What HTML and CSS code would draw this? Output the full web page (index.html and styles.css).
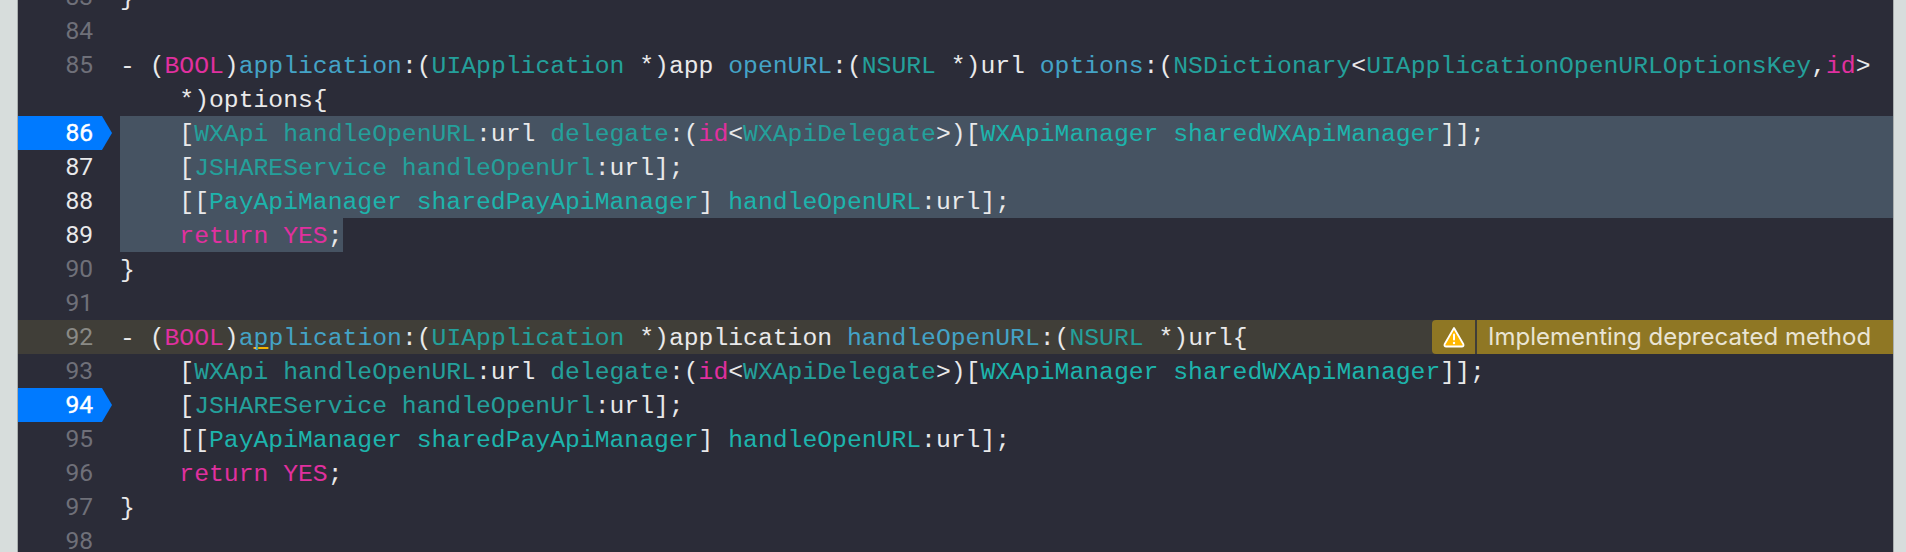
FILE: index.html
```html
<!DOCTYPE html>
<html lang="en">
<head>
<meta charset="utf-8">
<title>Editor</title>
<link rel="stylesheet" href="styles.css">
</head>
<body>
<div class="window">
  <div class="left-edge"></div>
  <main class="editor">
    <div class="row"><span class="num">83</span><code class="code">}</code></div>
    <div class="row"><span class="num">84</span><code class="code"></code></div>
    <div class="row"><span class="num">85</span><code class="code">- (<i class="kw">BOOL</i>)<i class="mth">application</i>:(<i class="typ">UIApplication</i> *)app <i class="mth">openURL</i>:(<i class="typ">NSURL</i> *)url <i class="mth">options</i>:(<i class="typ">NSDictionary</i>&lt;<i class="typ">UIApplicationOpenURLOptionsKey</i>,<i class="kw">id</i>&gt;</code></div>
    <div class="row"><span class="num"></span><code class="code">    *)options{</code></div>
    <div class="row row-active"><span class="num bp">86</span><code class="code sel">    [<i class="typ">WXApi</i> <i class="typ">handleOpenURL</i>:url <i class="typ">delegate</i>:(<i class="kw">id</i>&lt;<i class="typ">WXApiDelegate</i>&gt;)[<i class="prj">WXApiManager</i> <i class="prj">sharedWXApiManager</i>]];</code></div>
    <div class="row row-active"><span class="num">87</span><code class="code sel">    [<i class="typ">JSHAREService</i> <i class="typ">handleOpenUrl</i>:url];</code></div>
    <div class="row row-active"><span class="num">88</span><code class="code sel">    [[<i class="prj">PayApiManager</i> <i class="prj">sharedPayApiManager</i>] <i class="prj">handleOpenURL</i>:url];</code></div>
    <div class="row row-active"><span class="num">89</span><code class="code"><span class="sel-part">    <i class="kw">return</i> <i class="kw">YES</i>;</span></code></div>
    <div class="row"><span class="num">90</span><code class="code">}</code></div>
    <div class="row"><span class="num">91</span><code class="code"></code></div>
    <div class="row row-warn"><span class="num">92</span><code class="code">- (<i class="kw">BOOL</i>)<i class="mth">a<u class="squiggle">p</u>plication</i>:(<i class="typ">UIApplication</i> *)application <i class="mth">handleOpenURL</i>:(<i class="typ">NSURL</i> *)url{</code>
      <div class="issue">
        <span class="issue-icon">
          <svg width="22" height="22" viewBox="0 0 22 22" aria-hidden="true">
            <path d="M11 2 L20.4 18.2 Q21 20.5 18.8 20.5 L3.2 20.5 Q1 20.5 1.6 18.2 Z" fill="#ffb800" stroke="#fff" stroke-width="1.8" stroke-linejoin="round"/>
            <rect x="10" y="7.5" width="2" height="7" rx="1" fill="#fff"/>
            <circle cx="11" cy="17" r="1.2" fill="#fff"/>
          </svg>
        </span>
        <span class="issue-text">Implementing deprecated method</span>
      </div>
    </div>
    <div class="row"><span class="num">93</span><code class="code">    [<i class="typ">WXApi</i> <i class="typ">handleOpenURL</i>:url <i class="typ">delegate</i>:(<i class="kw">id</i>&lt;<i class="typ">WXApiDelegate</i>&gt;)[<i class="prj">WXApiManager</i> <i class="prj">sharedWXApiManager</i>]];</code></div>
    <div class="row row-active"><span class="num bp">94</span><code class="code">    [<i class="typ">JSHAREService</i> <i class="typ">handleOpenUrl</i>:url];</code></div>
    <div class="row"><span class="num">95</span><code class="code">    [[<i class="prj">PayApiManager</i> <i class="prj">sharedPayApiManager</i>] <i class="prj">handleOpenURL</i>:url];</code></div>
    <div class="row"><span class="num">96</span><code class="code">    <i class="kw">return</i> <i class="kw">YES</i>;</code></div>
    <div class="row"><span class="num">97</span><code class="code">}</code></div>
    <div class="row"><span class="num">98</span><code class="code"></code></div>
  </main>
  <div class="right-edge"></div>
</div>
</body>
</html>
```

FILE: styles.css
```css
* { box-sizing: border-box; }
html, body { margin: 0; height: 100%; overflow: hidden; background: #d7dddc; }
.window { display: flex; height: 552px; overflow: hidden; }
.left-edge { width: 18px; flex: none; background: #d7dddc; border-right: 1px solid #a9aeae; }
.right-edge { width: 13px; flex: none; background: #d7dddc; border-left: 1px solid #a9aeae; }
.editor { flex: 1; min-width: 0; background: #2b2c38; overflow: hidden; }
.editor > .row:first-child { margin-top: -20px; }
.row { display: flex; height: 34px; line-height: 34px; }
.num {
  flex: none; width: 102px; padding: 0 27px 0 0; text-align: right; position: relative;
  font: 24.5px/34px "Liberation Sans Narrow", "Roboto", sans-serif; color: #6f7079;
}
.row-active .num { color: #e9e9ea; }
.num.bp { background: #007aff; color: #fff; -webkit-text-stroke: 0.4px #fff; width: 84px; padding-right: 9px; margin-right: 18px; }
.num.bp::after {
  content: ""; position: absolute; left: 100%; top: 0;
  border-left: 10px solid #007aff; border-top: 17px solid transparent; border-bottom: 17px solid transparent;
}
.code {
  flex: 1; min-width: 0; height: 34px; white-space: pre; font: 24.72px/36px "Liberation Mono", monospace; color: #e9e9ea;
}
.code i { font-style: normal; }
.sel { background: #465362; }
.sel-part { display: inline-block; background: #465362; height: 34px; vertical-align: top; }
.kw { color: #e0309f; }
.mth { color: #44a3c6; }
.typ { color: #24a09b; }
.prj { color: #1db4ac; }
.squiggle { text-decoration: underline #f2b200 2px; text-underline-offset: 2px; text-decoration-skip-ink: none; }
.row-warn { background: #403e38; position: relative; }
.row-warn .num { color: #8a8a86; }
.issue { position: absolute; right: 0; top: 0; height: 34px; display: flex; gap: 2px; }
.issue-icon { width: 43px; background: #8f7724; border-radius: 4px 0 0 4px; display: flex; align-items: center; justify-content: center; }
.issue-text { width: 416px; padding-left: 11px; background: #8f7724; color: #e9e4d3; font: 24px/34px "Inter", sans-serif; }
```
